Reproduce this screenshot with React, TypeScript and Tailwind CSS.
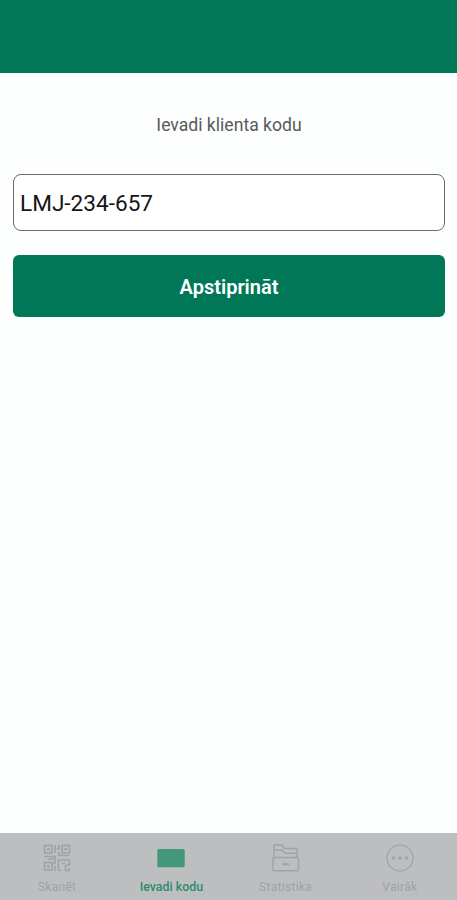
import React, { useState } from 'react';

const QrIcon = () => (
  <svg className="w-7 h-7" viewBox="0 0 28 28" fill="none" stroke="currentColor" strokeWidth={1.6}>
    <rect x="1.5" y="1.5" width="7.5" height="7.5" />
    <rect x="19" y="1.5" width="7.5" height="7.5" />
    <rect x="1.5" y="18.5" width="7.5" height="7.5" />
    <path d="M4 5.2h2.5M21.5 5.2H24M4 22.2h2.5" strokeWidth={2.5} />
    <path d="M12 1v8M16 1v4h-2M16 8v3.5h10.5M1 12.5h11V15H5M12 15v4.5H9.5M12 22v5M15.5 26.5V16h11v4.5l-4 1.5v4.5h4V24M19 19.5h3M18.5 26.5h-3" />
  </svg>
);

const CardIcon = () => (
  <svg className="w-7 h-7" viewBox="0 0 28 28" fill="currentColor">
    <rect x="0.3" y="5" width="27.4" height="18.3" rx="1.5" />
  </svg>
);

const ArchiveIcon = () => (
  <svg className="w-7 h-7" viewBox="0 0 28 28" fill="none" stroke="currentColor" strokeWidth={1.4} strokeLinejoin="round">
    <path d="M2 13.5V2q0-1 1-1h6.5L13 4.5h11q1.2 0 1.2 1.2v7.8" />
    <path d="M2 6h8l3 3.2h12" />
    <rect x="1" y="13.5" width="25.5" height="13.3" rx="1" />
    <path d="M10.5 20.2h6.5" strokeWidth={2.2} />
  </svg>
);

const MoreIcon = () => (
  <svg className="w-7 h-7" viewBox="0 0 28 28" fill="none" stroke="currentColor" strokeWidth={1.2}>
    <circle cx="14" cy="14" r="13" />
    <g fill="currentColor" stroke="none">
      <circle cx="7.5" cy="14" r="1.7" />
      <circle cx="14" cy="14" r="1.7" />
      <circle cx="20.5" cy="14" r="1.7" />
    </g>
  </svg>
);

const tabs = [
  { label: 'Skanēt', icon: QrIcon, active: false },
  { label: 'Ievadi kodu', icon: CardIcon, active: true },
  { label: 'Statistika', icon: ArchiveIcon, active: false },
  { label: 'Vairāk', icon: MoreIcon, active: false },
];

const App: React.FC = () => {
  const [code, setCode] = useState('LMJ-234-657');

  return (
    <div className="flex h-screen flex-col bg-[#fdfefe] font-[Roboto,sans-serif]">
      <header className="h-[73px] shrink-0 bg-[#007858]"></header>

      <main className="flex flex-1 flex-col pl-[13px] pr-3">
        <label htmlFor="code" className="mt-10 text-center text-[17.6px] leading-6 text-[#58595b]">
          Ievadi klienta kodu
        </label>
        <input
          id="code"
          value={code}
          onChange={(e) => setCode(e.target.value)}
          className="mt-[37px] h-[57px] w-full rounded-lg border border-[#6a6a6a] bg-white px-1.5 pt-0.5 text-[22.6px] text-[#161616] outline-none"
        />
        <button className="mt-6 h-[62px] w-full rounded-md bg-[#007858] pt-0.5 text-[20px] font-semibold text-white">
          Apstiprināt
        </button>
      </main>

      <nav className="grid h-[67px] shrink-0 grid-cols-4 bg-[#bcbec0] pt-[11px]">
        {tabs.map(({ label, icon: Icon, active }) => (
          <button
            key={label}
            className={`flex flex-col items-center ${active ? 'text-[#449779]' : 'text-[#a0a2a4]'}`}
          >
            <Icon />
            <span className={`mt-[7px] leading-4 ${active ? 'text-[12.4px] font-medium text-[#2f8c6c]' : 'text-[12px] tracking-[0.3px]'}`}>
              {label}
            </span>
          </button>
        ))}
      </nav>
    </div>
  );
};

export default App;
